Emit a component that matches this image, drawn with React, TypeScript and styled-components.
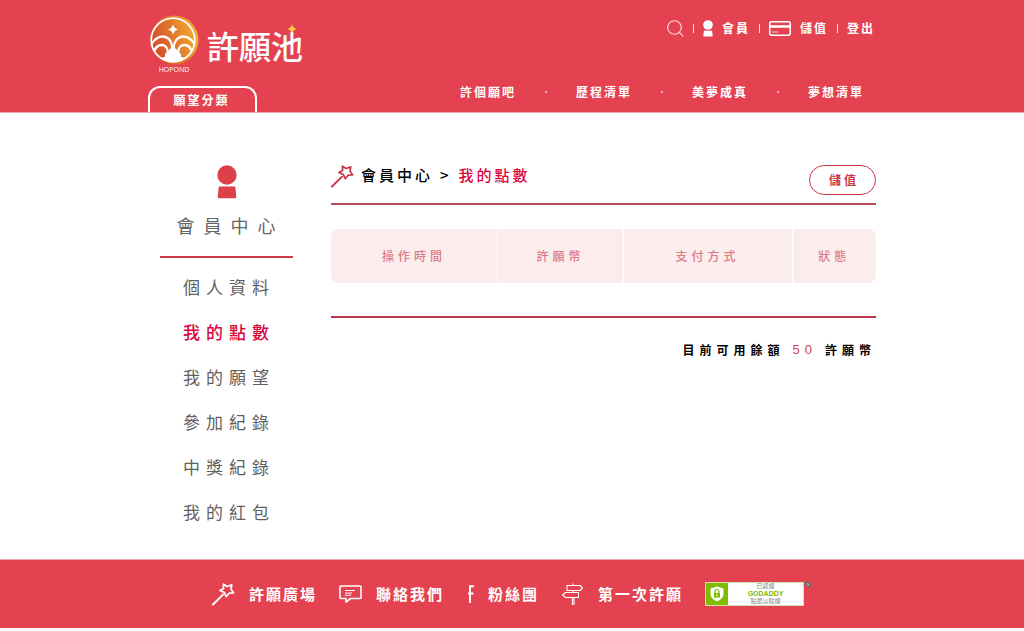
import React from "react";
import styled, { createGlobalStyle, css } from "styled-components";

const red = "#e44250";
const deepRed = "#c8384a";
const active = "#d8063c";

const GlobalStyle = createGlobalStyle`
  *, *::before, *::after { box-sizing: border-box; }
  body {
    margin: 0;
    background: #fff;
    color: #000;
    font-family: "Noto Sans CJK TC", "Noto Sans", sans-serif;
    font-size: 12px;
    line-height: 20px;
  }
  a { color: inherit; text-decoration: none; }
  button { font: inherit; cursor: pointer; }
  svg { display: block; flex: none; }
`;

const Container = styled.div`
  width: 100%;
  max-width: 728px;
  margin: 0 auto;
`;

const Header = styled.header`
  background: ${red};
  color: #fff;
  border-bottom: 1px solid #f3a7ae;
`;

const HeaderInner = styled(Container)`
  display: flex;
  justify-content: space-between;
`;

const HeaderLeft = styled.div`
  display: flex;
  flex-direction: column;
  align-items: flex-start;
  gap: 11px;
  padding-top: 15px;
`;

const HeaderRight = styled.div`
  display: flex;
  flex-direction: column;
  align-items: flex-end;
  gap: 44px;
  padding: 18px 1px 0 0;
`;

const Logo = styled.a`
  display: flex;
  align-items: flex-start;
  gap: 7px;
`;

const LogoMark = styled.span`
  display: flex;
  flex-direction: column;
  align-items: center;
  width: 52px;
  font: 7px/10px "Open Sans", sans-serif;
`;

const LogoName = styled.span`
  position: relative;
  padding-top: 10px;
  font-size: 32px;
  line-height: 40px;
  font-weight: 500;
`;

const LogoSpark = styled.svg`
  position: absolute;
  top: 9px;
  right: 6px;
`;

const CategoryTab = styled.button`
  width: 109px;
  height: 26px;
  padding: 0 2px 0 0;
  border: 2px solid #fff;
  border-bottom: 0;
  border-radius: 12px 12px 0 0;
  background: transparent;
  color: #fff;
  font-weight: 700;
  line-height: 20px;
  letter-spacing: 2px;
`;

const TopLinks = styled.nav`
  display: flex;
  align-items: center;
  gap: 9px;
  font-weight: 700;
  letter-spacing: 2px;
`;

const TopLink = styled.a`
  display: flex;
  align-items: center;
  gap: 9px;
`;

const IconButton = styled.button`
  padding: 0;
  border: 0;
  background: none;
  color: inherit;
`;

const Divider = styled.span`
  width: 1px;
  height: 9px;
  background: #fbd5d8;
`;

const MainNav = styled.nav`
  display: flex;
  align-items: center;
  gap: 29px;
  padding-right: 11px;
  font-weight: 700;
  letter-spacing: 2px;
`;

const Dot = styled.span`
  width: 2px;
  height: 2px;
  border-radius: 1px;
  background: #fbd5d8;
`;

const Body = styled(Container)`
  display: flex;
  align-items: flex-start;
  gap: 38px;
  padding: 52px 0 25px 12px;
`;

const Sidebar = styled.aside`
  flex: 0 0 133px;
  display: flex;
  flex-direction: column;
  align-items: center;
`;

const SidebarTitle = styled.h2`
  width: 100%;
  margin: 0 0 6px;
  padding: 11px 0 16px 8px;
  border-bottom: 2px solid #cc3a49;
  color: #666;
  font-size: 18px;
  font-weight: 400;
  line-height: 30px;
  letter-spacing: 9px;
  text-align: center;
`;

const SideLink = styled.a<{ $active?: boolean }>`
  width: 100%;
  padding-left: 5px;
  color: #5f5f5f;
  font-size: 17px;
  line-height: 45px;
  letter-spacing: 6px;
  text-align: center;
  ${(p) =>
    p.$active &&
    css`
      color: ${active};
      font-weight: 500;
    `}
`;

const Main = styled.main`
  flex: 1;
  min-width: 0;
`;

const TitleBar = styled.div`
  display: flex;
  align-items: flex-start;
  justify-content: space-between;
  padding-bottom: 8px;
  border-bottom: 2px solid #bb4a57;
`;

const Breadcrumb = styled.h1`
  display: flex;
  align-items: flex-start;
  gap: 7px;
  margin: 0;
  font-size: 15px;
  font-weight: 500;
  line-height: 20px;
  letter-spacing: 3px;
  color: #000;
`;

const Current = styled.span`
  color: ${active};
`;

const WandSlot = styled.span`
  color: ${deepRed};
`;

const Outline = styled.button`
  width: 67px;
  height: 30px;
  padding: 0 0 0 3px;
  border: 1px solid ${deepRed};
  border-radius: 15px;
  background: #fff;
  color: ${deepRed};
  font-weight: 700;
  letter-spacing: 3px;
`;

const Points = styled.table`
  width: 100%;
  margin-top: 24px;
  border-spacing: 0;
  table-layout: fixed;
  border-radius: 8px;
  overflow: hidden;
`;

const HeadCell = styled.th<{ $share: string }>`
  width: ${(p) => p.$share};
  height: 54px;
  padding: 0;
  background: #fbecee;
  color: #dd7b83;
  font-weight: 500;
  letter-spacing: 4px;
  & + & {
    border-left: 1px solid #fff;
  }
`;

const Balance = styled.p`
  display: flex;
  justify-content: flex-end;
  gap: 8px;
  margin: 33px 0 0;
  padding-top: 22px;
  border-top: 2px solid #b8374a;
  font-weight: 700;
  letter-spacing: 5px;
`;

const Amount = styled.span`
  color: #cf4450;
  font-family: "Liberation Sans", sans-serif;
  font-size: 13px;
  font-weight: 400;
`;

const Footer = styled.footer`
  background: ${red};
  color: #fff;
  border-top: 1px solid #f3a7ae;
`;

const FooterInner = styled.div`
  display: flex;
  align-items: center;
  justify-content: center;
  gap: 22px;
  height: 68px;
`;

const FooterLink = styled.a`
  display: flex;
  align-items: center;
  gap: 14px;
  font-size: 15px;
  font-weight: 700;
  letter-spacing: 2px;
  white-space: nowrap;
`;

const Seal = styled.a`
  position: relative;
  display: flex;
  width: 99px;
  height: 24px;
  margin-right: 8px;
  border: 1px solid #cfe3b0;
  background: #fff;
`;

const SealLock = styled.span`
  display: flex;
  align-items: center;
  justify-content: center;
  width: 22px;
  background: #7fbb00;
`;

const SealText = styled.span`
  flex: 1;
  display: flex;
  flex-direction: column;
  align-items: center;
  justify-content: center;
  color: #888;
  font: 6px/7px "Liberation Sans", "Noto Sans CJK TC", sans-serif;
`;

const SealBrand = styled.strong`
  color: #7fb800;
  font-size: 7px;
  line-height: 8px;
`;

const SealGem = styled.svg`
  position: absolute;
  top: -2px;
  right: -9px;
`;

const Wand = () => (
  <svg width="23" height="23" viewBox="0 0 23 23" fill="none" stroke="currentColor" strokeWidth="1.700" strokeLinejoin="round">
    <path d="M1 21.500 11 11.600" strokeLinecap="round" strokeWidth="2" />
    <path d="M11.400 1.200 15.200 3.500 19.800 1.800 19 6.200 21.600 9.800 17.200 10.200 14.200 13.600 12.400 9.600 8 7.600 11.600 5.400Z" />
  </svg>
);

const Person = ({ width, height, color }: { width: number; height: number; color: string }) => (
  <svg width={width} height={height} viewBox="0 0 20 34" fill={color}>
    <circle cx="10" cy="10" r="9.700" />
    <path d="M2.500 21.500h15q.8 0 .9.9l.9 9.400q.1 1.400-1.200 1.400H1.900q-1.300 0-1.200-1.400l.9-9.400q.1-.9.9-.9Z" />
  </svg>
);

const Emblem = () => (
  <svg width="50" height="50" viewBox="0 0 50 50">
    <defs>
      <linearGradient id="sun" x1="0" y1="0.6" x2="1" y2="0.300">
        <stop offset="0" stopColor="#d2452c" />
        <stop offset="0.5" stopColor="#e07a2b" />
        <stop offset="1" stopColor="#f5b233" />
      </linearGradient>
      <clipPath id="disc">
        <circle cx="24" cy="25" r="21.500" />
      </clipPath>
    </defs>
    <circle cx="25" cy="25" r="24.500" fill="url(#sun)" />
    <circle cx="24" cy="25" r="21.800" fill="none" stroke="#fff" strokeWidth="1.800" />
    <path d="M24 9Q24.800 13.700 29 14.500 24.800 15.300 24 20 23.200 15.300 19 14.500 23.200 13.700 24 9Z" fill="#fff" />
    <g clipPath="url(#disc)" fill="none" stroke="#fff" strokeWidth="2.400">
      <path d="M23.500 36C24 19 9 17 2 30" />
      <path d="M24.500 36C24 19 39 17 46 30" />
      <path d="M19 38C19 28 8 27 5 37" />
      <path d="M29 38C29 28 40 27 43 37" />
      <path
        d="M13 47q-2-5 3-5-1-5 3.500-4.500Q20 33 24 32.500q4 .5 4.500 5 4.500-.5 3.500 4.500 5 0 3 5Z"
        fill="#fff"
        stroke="none"
      />
    </g>
  </svg>
);

const sideItems = ["個人資料", "我的點數", "我的願望", "參加紀錄", "中獎紀錄", "我的紅包"];
const navItems = ["許個願吧", "歷程清單", "美夢成真", "夢想清單"];
const columns = [
  { label: "操作時間", share: "30.5%" },
  { label: "許願幣", share: "23%" },
  { label: "支付方式", share: "31%" },
  { label: "狀態", share: "15.5%" },
];

export default function App() {
  return (
    <>
      <GlobalStyle />
      <Header>
        <HeaderInner>
          <HeaderLeft>
            <Logo href="#">
              <LogoMark>
                <Emblem />
                HOPOND
              </LogoMark>
              <LogoName>
                許願池
                <LogoSpark width="10" height="10" viewBox="0 0 12 12" fill="#ffd23c">
                  <path d="M6 0Q6.800 5.200 12 6 6.800 6.800 6 12 5.200 6.800 0 6 5.200 5.200 6 0Z" />
                </LogoSpark>
              </LogoName>
            </Logo>
            <CategoryTab type="button">願望分類</CategoryTab>
          </HeaderLeft>
          <HeaderRight>
            <TopLinks aria-label="帳戶">
              <IconButton type="button" aria-label="搜尋">
                <svg width="17" height="17" viewBox="0 0 17 17" fill="none" stroke="#fbdcdf" strokeWidth="1.100">
                  <circle cx="7.500" cy="7.500" r="6.800" />
                  <path d="m12.300 12.300 4 4" />
                </svg>
              </IconButton>
              <Divider />
              <TopLink href="#">
                <Person width={10} height={17} color="#fff" />
                會員
              </TopLink>
              <Divider />
              <TopLink href="#">
                <svg width="22" height="15" viewBox="0 0 22 15" fill="none" stroke="#fff">
                  <rect x=".75" y=".75" width="20.500" height="13.500" rx="2" strokeWidth="1.500" />
                  <path d="M1 5.500h20" strokeWidth="2.500" />
                  <path d="M3 11h6" strokeWidth="1" strokeDasharray="1.500 .7" />
                </svg>
                儲值
              </TopLink>
              <Divider />
              <TopLink href="#">登出</TopLink>
            </TopLinks>
            <MainNav aria-label="主選單">
              {navItems.map((item, i) => (
                <React.Fragment key={item}>
                  {i > 0 && <Dot />}
                  <a href="#">{item}</a>
                </React.Fragment>
              ))}
            </MainNav>
          </HeaderRight>
        </HeaderInner>
      </Header>

      <Body>
        <Sidebar>
          <Person width={20} height={34} color="#dc4149" />
          <SidebarTitle>會員中心</SidebarTitle>
          {sideItems.map((item) => (
            <SideLink key={item} href="#" $active={item === "我的點數"}>
              {item}
            </SideLink>
          ))}
        </Sidebar>
        <Main>
          <TitleBar>
            <Breadcrumb>
              <WandSlot>
                <Wand />
              </WandSlot>
              <a href="#">會員中心</a>
              <span>&gt;</span>
              <Current>我的點數</Current>
            </Breadcrumb>
            <Outline type="button">儲值</Outline>
          </TitleBar>
          <Points>
            <thead>
              <tr>
                {columns.map((c) => (
                  <HeadCell key={c.label} scope="col" $share={c.share}>
                    {c.label}
                  </HeadCell>
                ))}
              </tr>
            </thead>
          </Points>
          <Balance>
            目前可用餘額 <Amount>50</Amount> <span>許願幣</span>
          </Balance>
        </Main>
      </Body>

      <Footer>
        <FooterInner>
          <FooterLink href="#">
            <Wand />
            許願廣場
          </FooterLink>
          <FooterLink href="#">
            <svg width="23" height="18" viewBox="0 0 23 18" fill="none" stroke="#fff" strokeWidth="1.600" strokeLinejoin="round">
              <path d="M2 1h19q1 0 1 1v10.500q0 1-1 1H11.500L7 17v-3.500H2q-1 0-1-1V2q0-1 1-1Z" />
              <path d="M6 5.500h10M6 8h7M6 10.200h6" strokeWidth="1" />
            </svg>
            聯絡我們
          </FooterLink>
          <FooterLink href="#">
            <svg width="8" height="18" viewBox="0 0 8 18" fill="none" stroke="#fff" strokeWidth="1.900">
              <path d="M8 1.300H4V18M2 8.500h5.500" />
            </svg>
            粉絲團
          </FooterLink>
          <FooterLink href="#">
            <svg width="23" height="23" viewBox="0 0 23 23" fill="none" stroke="#fff" strokeWidth="1.100" strokeLinejoin="round">
              <path d="M6 2.500h13l2.500 2.500L19 7.500H6ZM4.500 9.500h13v5h-13L1.500 12ZM12 .5v2M12 7.500v2M11.400 14.500V22M13 14.500V22" />
            </svg>
            第一次許願
          </FooterLink>
          <Seal href="#">
            <SealLock>
              <svg width="14" height="16" viewBox="0 0 14 16">
                <path d="M7 .5 13.500 2.500V8q0 5-6.500 7.500Q.5 13 .5 8V2.500Z" fill="#fff" />
                <path d="M4 7h6v4.500H4Z" fill="#7fbb00" />
                <path d="M5 7V5.500a2 2 0 0 1 4 0V7" fill="none" stroke="#7fbb00" strokeWidth="1.200" />
                <path d="M7 8.200v2" stroke="#fff" />
              </svg>
            </SealLock>
            <SealText>
              <span>已認證</span>
              <SealBrand>GODADDY</SealBrand>
              <span>點選以驗證</span>
            </SealText>
            <SealGem width="8" height="8" viewBox="0 0 8 8">
              <path d="M0 1 4 0 8 3 5 7 2 5Z" fill="#7a6a6c" />
              <path d="m3 2 2 1-1 2Z" fill="#b9d7c4" />
            </SealGem>
          </Seal>
        </FooterInner>
      </Footer>
    </>
  );
}
